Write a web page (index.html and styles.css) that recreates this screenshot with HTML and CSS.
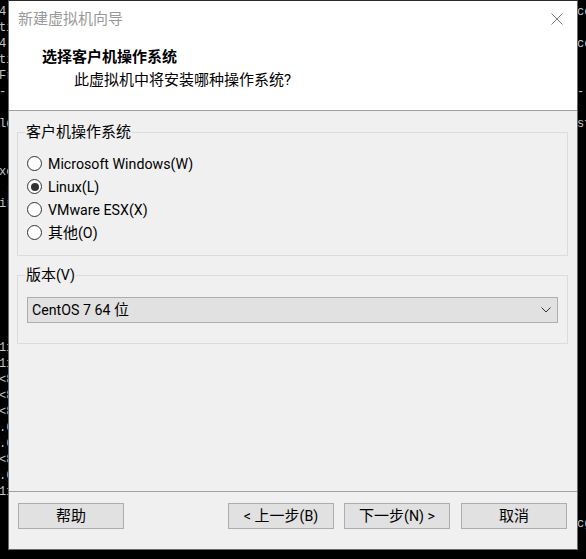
FILE: index.html
```html
<!DOCTYPE html>
<html lang="zh-CN">
<head>
<meta charset="utf-8">
<title>新建虚拟机向导</title>
<link rel="stylesheet" href="styles.css">
</head>
<body>
<div class="desk">
<pre class="term term-left">4.
ti
4.
ti
Fr
--

ld


xe
 (
ir








11
11
&lt;8
&lt;8
&lt;8
.6
.6
&lt;8
.6
11</pre>
<pre class="term term-right">co

co


--

sf
























cg</pre>
  <div class="dialog">
    <div class="header">
      <div class="titlebar">
        <span class="title">新建虚拟机向导</span>
        <svg class="close" width="12" height="12" viewBox="0 0 12 12"><path d="M0.5 0.5 L11.5 11.5 M11.5 0.5 L0.5 11.5" stroke="#7a7a7a" stroke-width="1" fill="none"/></svg>
      </div>
      <div class="heading">选择客户机操作系统</div>
      <div class="subheading">此虚拟机中将安装哪种操作系统?</div>
    </div>
    <div class="body">
      <fieldset class="group group-os">
        <legend>客户机操作系统</legend>
        <div class="radio"><span class="circle"></span><span class="lat">Microsoft Windows(W)</span></div>
        <div class="radio"><span class="circle checked"></span><span class="lat">Linux(L)</span></div>
        <div class="radio"><span class="circle"></span><span class="lat">VMware ESX(X)</span></div>
        <div class="radio"><span class="circle"></span><span>其他<span class="lat">(O)</span></span></div>
      </fieldset>
      <fieldset class="group group-ver">
        <legend>版本<span class="lat">(V)</span></legend>
        <div class="select">
          <span><span class="lat">CentOS 7 64 </span>位</span>
          <svg class="chev" width="10" height="6" viewBox="0 0 10 6"><path d="M0.5 0.5 L5 5 L9.5 0.5" stroke="#333" stroke-width="1" fill="none"/></svg>
        </div>
      </fieldset>
    </div>
    <div class="footer">
      <div class="btn">帮助</div>
      <div class="btn btn-prev"><span class="lat">&lt;&nbsp;</span>上一步<span class="lat">(B)</span></div>
      <div class="btn btn-next">下一步<span class="lat">(N)&nbsp;&gt;</span></div>
      <div class="btn btn-cancel">取消</div>
    </div>
  </div>
</div>
</body>
</html>
```
FILE: styles.css
```css
html, body {
  margin: 0;
  padding: 0;
  background: #000;
}
.desk {
  position: relative;
  width: 586px;
  height: 559px;
  overflow: hidden;
  background: #000;
}
.term {
  position: absolute;
  top: 4px;
  margin: 0;
  overflow: hidden;
  font-family: "Liberation Mono", "DejaVu Sans Mono", monospace;
  font-size: 12px;
  line-height: 16px;
  color: #c4c4c4;
}
.term-left { left: -1px; width: 9px; }
.term-right { left: 577px; width: 9px; }

.dialog {
  position: absolute;
  left: 8px;
  top: 0;
  width: 570px;
  height: 550px;
  box-sizing: border-box;
  border: 1px solid #6a6a6a;
  border-top-color: #2a2a2a;
  background: #f0f0f0;
  display: flex;
  flex-direction: column;
  font-family: Roboto, "Noto Sans CJK SC", sans-serif;
  font-size: 15px;
  color: #000;
}
.lat {
  font-size: 14.2px;
}
.header {
  height: 109px;
  background: #fff;
  border-bottom: 1px solid #a0a0a0;
  flex-shrink: 0;
}
.titlebar {
  height: 36px;
  display: flex;
  align-items: center;
  justify-content: space-between;
  padding: 0 14px 0 9px;
}
.title {
  color: #999;
  line-height: 20px;
}
.close { display: block; }
.heading {
  margin-top: 10px;
  padding-left: 33px;
  line-height: 20px;
  font-weight: bold;
}
.subheading {
  margin-top: 3px;
  padding-left: 65px;
  line-height: 20px;
}
.body {
  flex: 1;
  padding: 0 9px 0 8px;
}
.group {
  margin: 0;
  border: 1px solid #dcdcdc;
  padding: 0 9px;
  min-width: 0;
}
.group legend {
  padding: 0 1px;
  margin-left: -2px;
  line-height: 20px;
}
.group-os {
  margin-top: 11px;
  padding-top: 10px;
  padding-bottom: 11px;
}
.group-ver {
  margin-top: 9px;
  padding-top: 12px;
  padding-bottom: 20px;
}
.radio {
  height: 23px;
  display: flex;
  align-items: center;
  line-height: 20px;
}
.circle {
  width: 15px;
  height: 15px;
  box-sizing: border-box;
  border: 1px solid #333;
  border-radius: 50%;
  background: #fff;
  margin-right: 6px;
  display: flex;
  align-items: center;
  justify-content: center;
  flex-shrink: 0;
}
.circle.checked::after {
  content: "";
  width: 8px;
  height: 8px;
  border-radius: 50%;
  background: #333;
}
.select {
  height: 26px;
  box-sizing: border-box;
  border: 1px solid #adadad;
  background: #e1e1e1;
  display: flex;
  align-items: center;
  justify-content: space-between;
  padding: 0 6px 0 4px;
  line-height: 20px;
}
.chev { display: block; }
.footer {
  height: 46px;
  flex-shrink: 0;
  border-top: 1px solid #a0a0a0;
  display: flex;
  align-items: flex-start;
  padding: 11px 10px 0 9px;
}
.btn {
  width: 106px;
  height: 26px;
  box-sizing: border-box;
  border: 1px solid #adadad;
  background: #e1e1e1;
  display: flex;
  align-items: center;
  justify-content: center;
  line-height: 20px;
  white-space: pre;
}
.btn-prev { margin-left: auto; }
.btn-next { margin-left: 10px; }
.btn-cancel { margin-left: 11px; }
```
